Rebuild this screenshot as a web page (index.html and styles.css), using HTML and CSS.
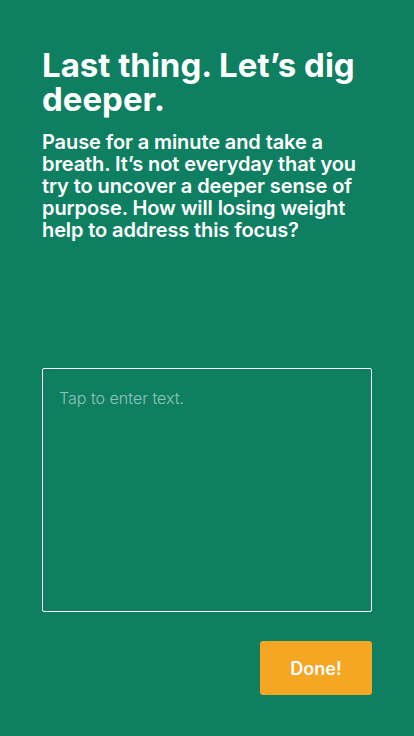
FILE: index.html
```html
<!DOCTYPE html>
<html>
<head>
<meta charset="utf-8">
<link rel="stylesheet" href="styles.css">
</head>
<body>
<main class="screen">
  <h1 class="title">Last thing. Let’s dig deeper.</h1>
  <p class="lead">Pause for a minute and take a breath. It’s not everyday that you try to uncover a deeper sense of purpose. How will losing weight help to address this focus?</p>
  <div class="entry"><span class="placeholder">Tap to enter text.</span></div>
  <div class="actions"><button class="done">Done!</button></div>
</main>
</body>
</html>
```
FILE: styles.css
```css
html, body {
  margin: 0;
  padding: 0;
  background: #0f7f62;
}
.screen {
  width: 414px;
  height: 736px;
  box-sizing: border-box;
  padding: 48px 42px 0;
  display: flex;
  flex-direction: column;
  font-family: Inter, "Noto Sans", sans-serif;
  color: #fff;
}
.title {
  margin: 0;
  font-size: 33px;
  line-height: 34px;
  font-weight: 700;
  letter-spacing: 0;
}
.lead {
  margin: 15px 0 0;
  font-size: 20px;
  line-height: 22px;
  font-weight: 600;
  letter-spacing: -0.1px;
}
.entry {
  margin-top: 127px;
  height: 244px;
  border: 1px solid #fff;
  border-radius: 2px;
  box-sizing: border-box;
  padding: 19px 16px;
}
.placeholder {
  font-size: 16px;
  font-weight: 300;
  color: rgba(255,255,255,0.55);
}
.actions {
  display: flex;
  justify-content: flex-end;
  margin-top: 29px;
}
.done {
  width: 112px;
  height: 54px;
  border: none;
  border-radius: 3px;
  background: #f5a623;
  color: #fff;
  font-family: Inter, "Noto Sans", sans-serif;
  font-size: 18px;
  font-weight: 600;
}
```
